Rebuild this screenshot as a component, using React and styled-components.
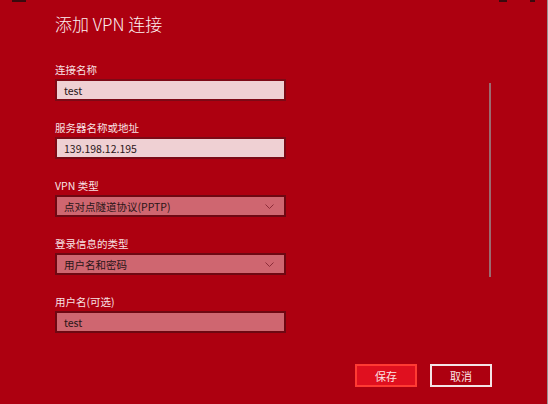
import styled, { createGlobalStyle } from "styled-components";

const GlobalStyle = createGlobalStyle`
    html, body {
        margin: 0;
        padding: 0;
        background: #ad0010;
    }
    * {
        box-sizing: border-box;
    }
`;

const fields = [
    { label: "连接名称", value: "test", kind: "text" },
    { label: "服务器名称或地址", value: "139.198.12.195", kind: "text" },
    { label: "VPN 类型", value: "点对点隧道协议(PPTP)", kind: "select" },
    { label: "登录信息的类型", value: "用户名和密码", kind: "select" },
    { label: "用户名(可选)", value: "test", kind: "muted" },
];

function Chevron() {
    return (
        <svg width="9" height="5" viewBox="0 0 9 5">
            <polyline
                points="0.5,0.5 4.5,4.5 8.5,0.5"
                fill="none"
                stroke="#8c2c38"
                strokeWidth="1"
            />
        </svg>
    );
}

function App() {
    return (
        <StyledWindow>
            <GlobalStyle />
            <StyledEdgeMark $left={12} $width={14} />
            <StyledEdgeMark $left={499} $width={8} />
            <StyledEdgeMark $left={530} $width={5} />
            <StyledMain>
                <StyledTitle>添加 VPN 连接</StyledTitle>
                <StyledForm>
                    {fields.map((f) => (
                        <StyledField key={f.label}>
                            <StyledLabel>{f.label}</StyledLabel>
                            <StyledControl $kind={f.kind}>
                                <span>{f.value}</span>
                                {f.kind === "select" && <Chevron />}
                            </StyledControl>
                        </StyledField>
                    ))}
                </StyledForm>
            </StyledMain>
            <StyledScrollbar />
            <StyledFooter>
                <StyledButton $primary>保存</StyledButton>
                <StyledButton>取消</StyledButton>
            </StyledFooter>
        </StyledWindow>
    );
}

const StyledWindow = styled.div`
    position: relative;
    width: 548px;
    height: 404px;
    background: #ad0010;
    border-right: 1px solid #9a8e90;
    overflow: hidden;
    display: flex;
    flex-direction: column;
    font-family: "Noto Sans CJK SC", "Noto Sans", sans-serif;
    color: #fbe9ea;
`;
const StyledEdgeMark = styled.span`
    position: absolute;
    top: 0;
    left: ${(p) => p.$left}px;
    width: ${(p) => p.$width}px;
    height: 2px;
    background: #3a0a0e;
`;
const StyledMain = styled.div`
    flex: 1;
    padding: 12px 0 0 55px;
`;
const StyledTitle = styled.h1`
    margin: 0;
    font-size: 17px;
    line-height: 24px;
    font-weight: 300;
    color: #fdf1f2;
`;
const StyledForm = styled.div`
    margin-top: 27px;
    width: 231px;
    display: flex;
    flex-direction: column;
    gap: 20px;
`;
const StyledField = styled.div`
    display: flex;
    flex-direction: column;
`;
const StyledLabel = styled.div`
    font-size: 10.5px;
    line-height: 14px;
    margin-bottom: 2px;
    color: #f8e2e4;
`;
const StyledControl = styled.div`
    height: 22px;
    display: flex;
    align-items: center;
    justify-content: space-between;
    padding: 0 10px 0 7px;
    font-size: 10.5px;
    color: #2a1517;
    background: ${(p) => (p.$kind === "text" ? "#efd0d3" : "#cf6670")};
    border: 2px solid ${(p) => (p.$kind === "text" ? "#7c0a16" : "#6e0812")};
`;
const StyledScrollbar = styled.div`
    position: absolute;
    left: 489px;
    top: 83px;
    width: 2px;
    height: 194px;
    background: #9c6a70;
`;
const StyledFooter = styled.div`
    display: flex;
    justify-content: flex-end;
    gap: 13px;
    padding: 0 55px 17px 0;
`;
const StyledButton = styled.div`
    width: 62px;
    height: 23px;
    display: flex;
    align-items: center;
    justify-content: center;
    font-size: 11px;
    color: #fbe3e5;
    background: ${(p) => (p.$primary ? "#e0101f" : "transparent")};
    border: 2px solid ${(p) => (p.$primary ? "#ff3b33" : "#f4e4e6")};
`;

export default App;
